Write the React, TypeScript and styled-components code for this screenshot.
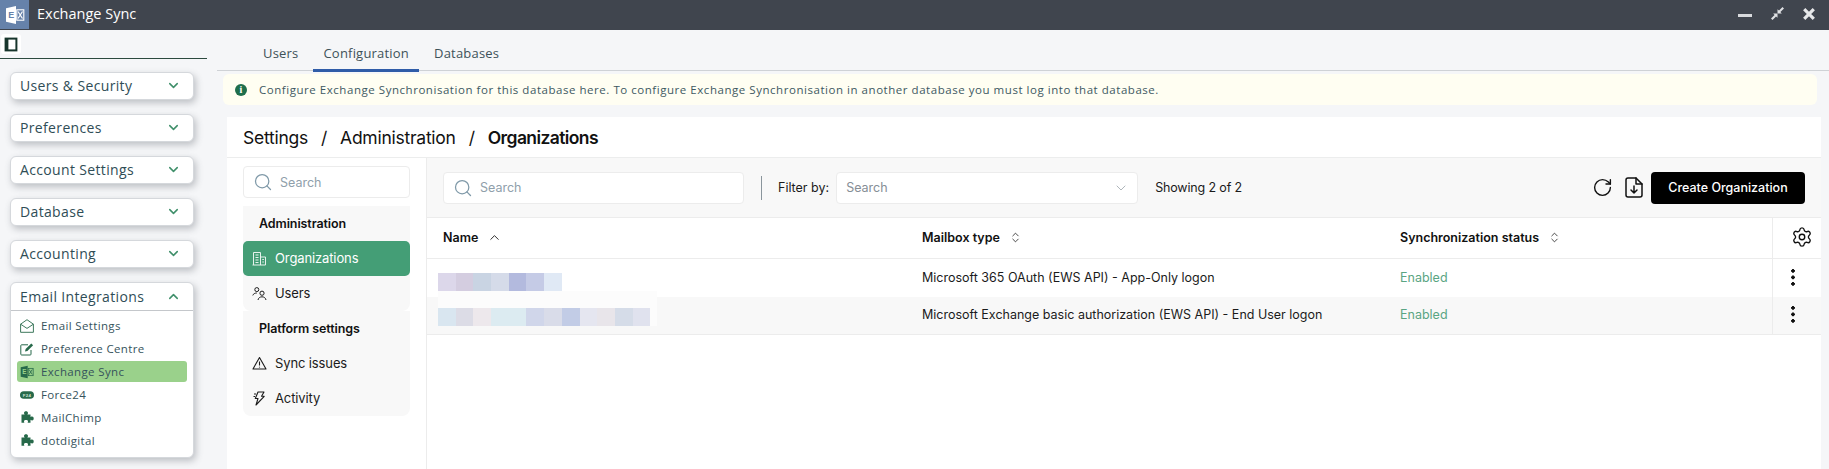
import React from 'react'
import styled, { createGlobalStyle } from 'styled-components'
import { ChevronDown, ChevronUp, ChevronsUpDown, Search as SearchIcon, RotateCw, Settings } from 'lucide-react'

const sidebarFont = `'Open Sans', 'Liberation Sans', sans-serif`
const contentFont = `Inter, 'Liberation Sans', sans-serif`

const Global = createGlobalStyle`
  html, body { margin: 0; padding: 0; height: 100%; background: #f5f6f8; overflow: hidden; }
  * { box-sizing: border-box; }
`

const Page = styled.div`
  width: 1829px;
  height: 469px;
  display: flex;
  flex-direction: column;
  overflow: hidden;
`

const TopBar = styled.header`
  height: 30px;
  flex: none;
  background: #40454e;
  display: flex;
  align-items: flex-start;
  color: #fff;
`

const LogoBox = styled.div`
  width: 29px;
  height: 29px;
  background: #6682aa;
  display: flex;
  align-items: center;
  justify-content: center;
`

const AppTitle = styled.div`
  margin-left: 8px;
  font: 400 14.5px/27px ${sidebarFont};
  flex: 1;
`

const WindowButtons = styled.div`
  height: 27px;
  display: flex;
  align-items: center;
  gap: 18px;
  padding-right: 14px;
`

const Body = styled.div`
  flex: 1;
  display: flex;
  min-height: 0;
`

const Sidebar = styled.aside`
  width: 207px;
  flex: none;
  display: flex;
  flex-direction: column;
`

const ToggleRow = styled.div`
  height: 29px;
  border-bottom: 1px solid #2c4a3f;
  padding: 4px 0 0 1px;
  margin-bottom: 13px;
`

const ToggleBox = styled.div`
  width: 20px;
  height: 20px;
  background: #fff;
  border-radius: 3px;
  display: flex;
  align-items: center;
  justify-content: center;
`

const SideList = styled.div`
  display: flex;
  flex-direction: column;
  gap: 14px;
  padding: 0 13px 0 10px;
`

const SideCard = styled.div`
  background: #fff;
  border: 1px solid #d5d8dc;
  border-radius: 6px;
  box-shadow: 2px 3px 7px rgba(60, 65, 75, 0.3);
`

const SideHead = styled.div<{ $open?: boolean }>`
  height: ${p => (p.$open ? 28 : 26)}px;
  padding: 0 12px 1px 9px;
  display: flex;
  align-items: center;
  justify-content: space-between;
  font: 400 14px ${sidebarFont};
  letter-spacing: 0.35px;
  color: #2f4d56;
  border-bottom: ${p => (p.$open ? '1px solid #c4c7cb' : 'none')};
`

const SideItems = styled.div`
  padding: 4px 6px 6px 6px;
  display: flex;
  flex-direction: column;
  gap: 2px;
`

const SideItem = styled.div<{ $active?: boolean }>`
  height: 21px;
  display: flex;
  align-items: center;
  gap: 7px;
  padding-left: 3px;
  border-radius: 3px;
  background: ${p => (p.$active ? '#9ad18b' : 'transparent')};
  font: 400 11.5px ${sidebarFont};
  letter-spacing: 0.35px;
  color: #36535c;
`

const IconSlot = styled.span`
  width: 14px;
  height: 14px;
  flex: none;
  display: flex;
  align-items: center;
  justify-content: center;
`

const Main = styled.main`
  flex: 1;
  min-width: 0;
  display: flex;
  flex-direction: column;
  padding: 0 8px 0 10px;
  font-family: ${contentFont};
`

const Tabs = styled.nav`
  height: 41px;
  flex: none;
  display: flex;
  gap: 5px;
  align-items: flex-end;
  border-bottom: 1px solid #cfd2d6;
  margin: 0 -8px 0 0;
  padding-left: 36px;
`

const Tab = styled.div<{ $active?: boolean }>`
  height: 32px;
  padding: 0 10px;
  margin-bottom: -2px;
  font: 400 13px ${sidebarFont};
  letter-spacing: 0.2px;
  color: #3e5259;
  line-height: 26px;
  border-bottom: 3px solid ${p => (p.$active ? '#2f5ca8' : 'transparent')};
`

const Notice = styled.div`
  margin: 3px 4px 0 6px;
  height: 31px;
  flex: none;
  background: #fffef2;
  border-radius: 6px;
  display: flex;
  align-items: center;
  gap: 12px;
  padding-left: 12px;
  font: 400 11.5px ${sidebarFont};
  letter-spacing: 0.54px;
  color: #3e5962;
`

const Card = styled.section`
  margin: 12px 0 0 10px;
  flex: 1;
  min-height: 0;
  background: #fff;
  display: flex;
  flex-direction: column;
`

const Crumbs = styled.div`
  height: 41px;
  flex: none;
  border-bottom: 1px solid #eceded;
  padding-left: 16px;
  display: flex;
  align-items: center;
  font-size: 17.5px;
  color: #111;
  letter-spacing: -0.25px;
`

const CrumbSep = styled.span`
  margin: 0 13px;
`

const CrumbCurrent = styled.span`
  font-weight: 600;
  letter-spacing: -0.6px;
`

const Split = styled.div`
  flex: 1;
  min-height: 0;
  display: flex;
`

const LeftPanel = styled.div`
  width: 200px;
  flex: none;
  border-right: 1px solid #ececec;
  padding: 8px 16px 0;
`

const SearchBox = styled.div<{ $width: number }>`
  width: ${p => p.$width}px;
  height: 32px;
  flex: none;
  background: #fff;
  border: 1px solid #ececec;
  border-radius: 4px;
  display: flex;
  align-items: center;
  gap: 7px;
  padding-left: 9px;
  font-size: 12.5px;
  color: #8fa0ab;
`

const NavGroups = styled.div`
  margin-top: 8px;
`

const NavGroup = styled.div`
  background: #f8f8f8;
  border-radius: 0 0 8px 8px;
`

const NavTitle = styled.div`
  height: 35px;
  padding-left: 16px;
  display: flex;
  align-items: center;
  font-size: 12.5px;
  font-weight: 600;
  letter-spacing: -0.1px;
  color: #111;
`

const NavItem = styled.div<{ $active?: boolean }>`
  height: 35px;
  padding: 0 0 1px 9px;
  display: flex;
  align-items: center;
  gap: 8px;
  border-radius: 5px;
  font-size: 13px;
  letter-spacing: -0.12px;
  color: ${p => (p.$active ? '#fff' : '#1b1b1b')};
  background: ${p => (p.$active ? '#449e76' : 'transparent')};
`

const Content = styled.div`
  flex: 1;
  min-width: 0;
  display: flex;
  flex-direction: column;
`

const Toolbar = styled.div`
  height: 60px;
  flex: none;
  background: #f8f8f8;
  border-bottom: 1px solid #ececec;
  display: flex;
  align-items: center;
  padding: 0 16px;
  font-size: 12.5px;
  color: #1b1b1b;
`

const Divider = styled.div`
  width: 1px;
  height: 24px;
  background: #8a959c;
  margin: 0 16px 0 17px;
`

const FilterLabel = styled.span`
  margin-right: 7px;
`

const SelectBox = styled.div`
  width: 302px;
  height: 32px;
  background: #fff;
  border: 1px solid #ececec;
  border-radius: 4px;
  display: flex;
  align-items: center;
  justify-content: space-between;
  padding: 0 8px 0 9px;
  color: #868e96;
  margin-right: 17px;
`

const Counter = styled.span`
  letter-spacing: -0.15px;
`

const Spacer = styled.div`
  flex: 1;
`

const ToolIcons = styled.div`
  display: flex;
  align-items: center;
  gap: 12px;
  margin-right: 8px;
`

const PrimaryButton = styled.button`
  width: 154px;
  height: 32px;
  background: #000;
  color: #fff;
  border: 0;
  border-radius: 4px;
  font: 500 12.5px ${contentFont};
`

const TableGrid = styled.div`
  display: grid;
  grid-template-columns: 479px 478px 388px 49px;
`

const HeadCell = styled.div<{ $last?: boolean }>`
  height: 41px;
  display: flex;
  align-items: center;
  gap: 9px;
  padding: 0 0 2px ${p => (p.$last ? 9 : 16)}px;
  justify-content: ${p => (p.$last ? 'center' : 'flex-start')};
  border-bottom: 1px solid #ececec;
  border-left: ${p => (p.$last ? '1px solid #ececec' : 'none')};
  font-size: 12.5px;
  font-weight: 600;
  color: #111;
`

const Cell = styled.div<{ $alt?: boolean; $last?: boolean; $green?: boolean }>`
  height: 38px;
  display: flex;
  align-items: center;
  padding: 0 0 2px ${p => (p.$last ? 0 : 16)}px;
  justify-content: ${p => (p.$last ? 'center' : 'flex-start')};
  background: ${p => (p.$alt ? '#f8f8f8' : '#fff')};
  border-bottom: ${p => (p.$alt ? '1px solid #ececec' : 'none')};
  border-left: ${p => (p.$last ? '1px solid #ececec' : 'none')};
  font-size: 12.5px;
  color: ${p => (p.$green ? '#5aa583' : '#1b1b1b')};
`

const BlurRow = styled.div<{ $offset: number; $halo?: boolean }>`
  position: relative;
  display: flex;
  height: 18px;
  margin-left: -5px;
  margin-top: ${p => p.$offset}px;

  &::before {
    content: ${p => (p.$halo ? "''" : 'none')};
    position: absolute;
    left: 0;
    top: -17px;
    width: 219px;
    height: 35px;
    background: #fcfcfc;
  }
`

const BlurPatch = styled.span<{ $color: string }>`
  position: relative;
  width: 17.7px;
  background: ${p => p.$color};
`

const Dots = styled.span`
  width: 4px;
  height: 17px;
  margin-right: 8px;
  background: radial-gradient(circle at 2px 2px, #111 1.6px, transparent 1.9px) 0 0 / 4px 6.5px repeat-y;
`

const GreenChevron = { color: '#3f8f6a', strokeWidth: 2.4 }

const OutlookIcon = ({ color = '#fff', bg = 'transparent', size = 20 }: { color?: string; bg?: string; size?: number }) => (
  <svg width={size} height={size} viewBox="0 0 20 20">
    <path d="M1 3.2 11 1v18L1 16.8z" fill={color} />
    <rect x="11.8" y="4.8" width="7" height="10.4" fill="none" stroke={color} strokeWidth="1.1" />
    <path d="M13 6.5l4.5 7M17.5 6.5l-4.5 7" stroke={color} strokeWidth="1.2" />
    <text x="3.2" y="13.4" fontSize="9" fontWeight="700" fontFamily="Liberation Sans, sans-serif" fill={bg}>E</text>
  </svg>
)

const PuzzleIcon = () => (
  <svg width="13" height="13" viewBox="0 0 13 13">
    <path d="M0.5 3.5h3.2c-.5-.7-.7-1.100-.7-1.600C3 .9 3.900.3 5 .3s2 .6 2 1.600c0 .5-.2.9-.7 1.600h3.200v2.600c.7-.5 1.100-.6 1.600-.6 1 0 1.600.9 1.600 1.900s-.6 2-1.600 2c-.5 0-.9-.2-1.600-.7v3.100H6.600c.3-.6.4-1 .4-1.400 0-.9-.9-1.400-2-1.400s-2 .5-2 1.400c0 .4.100.8.4 1.400H.5z" fill="#27694a" />
  </svg>
)

const Force24Icon = () => (
  <svg width="14" height="14" viewBox="0 0 14 14">
    <rect x="0" y="3.2" width="14" height="7.6" rx="3.8" fill="#27694a" />
    <text x="7" y="8.7" textAnchor="middle" fontSize="4.4" fontWeight="700" fontFamily="Liberation Sans, sans-serif" fill="#cfe3d7">F24</text>
  </svg>
)

const MailOpenIcon = () => (
  <svg width="14" height="14" viewBox="0 0 14 14" fill="none" stroke="#27694a" strokeWidth="0.9">
    <path d="M.6 5.2 7 .7l6.400 4.500v8.100H.6z" />
    <path d="M.6 5.2 7 9.4l6.400-4.200" />
  </svg>
)

const PencilBoxIcon = () => (
  <svg width="14" height="14" viewBox="0 0 14 14" fill="none">
    <path d="M11 8v4.200a.8.8 0 0 1-.8.8H1.600a.8.8 0 0 1-.8-.8V3.600a.8.8 0 0 1 .8-.8H8" stroke="#27694a" strokeWidth="1" />
    <path d="M5 9.500l.6-2.400L11.300 1.400l1.800 1.800-5.700 5.700z" fill="#27694a" />
  </svg>
)

const ExportIcon = () => (
  <svg width="18" height="21" viewBox="0 0 18 21" fill="none" stroke="#111" strokeWidth="1.5" strokeLinejoin="round" strokeLinecap="round">
    <path d="M3 1h8l6 6v11a2 2 0 0 1-2 2H3a2 2 0 0 1-2-2V3a2 2 0 0 1 2-2z" />
    <path d="M11 1v6h6" />
    <path d="M9 9v7M6 13l3 3 3-3" />
  </svg>
)

const PanelIcon = () => (
  <svg width="14" height="15" viewBox="0 0 14 15">
    <rect x="1.6" y="1.6" width="10.8" height="11.8" fill="#fff" stroke="#17352c" strokeWidth="2" />
    <rect x="1" y="1" width="3.4" height="13" fill="#17352c" />
  </svg>
)

const CollapseIcon = () => (
  <svg width="15" height="15" viewBox="0 0 15 15" fill="#dfe1e4">
    <path d="M1 12.500 4.600 8.900 3.200 7.500H7.500v4.300L6 10.400 2.500 14z" />
    <path d="M14 2.500 10.400 6.100l1.400 1.400H7.500V3.200L9 4.600 12.500 1z" />
  </svg>
)

const CloseIcon = () => (
  <svg width="12" height="12" viewBox="0 0 12 12" stroke="#e6e7e9" strokeWidth="3.2">
    <path d="M1.200 1.200l9.600 9.600M10.800 1.200l-9.600 9.600" />
  </svg>
)

const BuildingIcon = () => (
  <svg width="15" height="15" viewBox="0 0 15 15" fill="none" stroke="#e6f2ec" strokeWidth="1">
    <path d="M1.500 14V1.500h7V14" />
    <path d="M8.500 6h5v8h-13" />
    <path d="M3.500 4h3M3.500 6.500h3M3.500 9h3M3.500 11.500h3M10.300 8.500h1.600M10.300 11h1.600" />
  </svg>
)

const PeopleIcon = () => (
  <svg width="15" height="15" viewBox="0 0 15 15" fill="none" stroke="#1b1b1b" strokeWidth="1">
    <circle cx="4.800" cy="3.600" r="2" />
    <path d="M.8 9.400C1.300 7.800 3 7 4.800 7" />
    <circle cx="10" cy="7.200" r="2.100" />
    <path d="M6 14c.3-2 2-3.200 4-3.200s3.700 1.200 4 3.200" />
  </svg>
)

const WarningIcon = () => (
  <svg width="15" height="15" viewBox="0 0 15 15" fill="none" stroke="#1b1b1b" strokeWidth="1.100" strokeLinejoin="round">
    <path d="M7.500 1.500 14 13H1z" />
    <path d="M7.500 5.500v4M7.500 10.800v.8" />
  </svg>
)

const BoltIcon = () => (
  <svg width="15" height="15" viewBox="0 0 15 15" fill="none" stroke="#1b1b1b" strokeWidth="1.100" strokeLinejoin="round">
    <path d="M6 1h6L9.500 5.300h2.700L4 14l2-6.500H3.300z" />
    <path d="M2 3h2M1.500 5.500h1.500" />
  </svg>
)

const MinimizeBar = styled.span`
  width: 14px;
  height: 3px;
  margin-top: 3px;
  background: #d8dadd;
`

const InfoDot = styled.span`
  width: 12px;
  height: 12px;
  border-radius: 50%;
  background: #1f6e4c;
  color: #fff;
  font: 700 10px/12px 'Liberation Serif', serif;
  letter-spacing: 0;
  text-align: center;
  flex: none;
`

const sideGroups = ['Users & Security', 'Preferences', 'Account Settings', 'Database', 'Accounting']

const emailItems = [
  { label: 'Email Settings', icon: <MailOpenIcon /> },
  { label: 'Preference Centre', icon: <PencilBoxIcon /> },
  { label: 'Exchange Sync', icon: <OutlookIcon color="#27694a" bg="#9ad18b" size={14} />, active: true },
  { label: 'Force24', icon: <Force24Icon /> },
  { label: 'MailChimp', icon: <PuzzleIcon /> },
  { label: 'dotdigital', icon: <PuzzleIcon /> },
]

const rows = [
  {
    mailbox: 'Microsoft 365 OAuth (EWS API) - App-Only logon',
    blurOffset: 10,
    blur: ['#dcd7ea', '#d4cde0', '#c9d4e3', '#d5dbe9', '#b3bade', '#c5cbe6', '#e0e9f5'],
  },
  {
    mailbox: 'Microsoft Exchange basic authorization (EWS API) - End User logon',
    blurOffset: 4,
    blur: ['#d9e6f0', '#dcdce6', '#ede8ec', '#dcebf1', '#dcebf1', '#d0d6ea', '#d9dce9', '#c2cce6', '#e5e6f0', '#e8e5ea', '#d5dce8', '#e0e2ee'],
  },
]

export default function App() {
  return (
    <Page>
      <Global />
      <TopBar>
        <LogoBox>
          <OutlookIcon bg="#6682aa" />
        </LogoBox>
        <AppTitle>Exchange Sync</AppTitle>
        <WindowButtons>
          <MinimizeBar />
          <CollapseIcon />
          <CloseIcon />
        </WindowButtons>
      </TopBar>
      <Body>
        <Sidebar>
          <ToggleRow>
            <ToggleBox>
              <PanelIcon />
            </ToggleBox>
          </ToggleRow>
          <SideList>
            {sideGroups.map(g => (
              <SideCard key={g}>
                <SideHead>
                  {g}
                  <ChevronDown size={15} {...GreenChevron} />
                </SideHead>
              </SideCard>
            ))}
            <SideCard>
              <SideHead $open>
                Email Integrations
                <ChevronUp size={15} {...GreenChevron} />
              </SideHead>
              <SideItems>
                {emailItems.map(i => (
                  <SideItem key={i.label} $active={i.active}>
                    <IconSlot>{i.icon}</IconSlot>
                    {i.label}
                  </SideItem>
                ))}
              </SideItems>
            </SideCard>
          </SideList>
        </Sidebar>
        <Main>
          <Tabs>
            <Tab>Users</Tab>
            <Tab $active>Configuration</Tab>
            <Tab>Databases</Tab>
          </Tabs>
          <Notice>
            <InfoDot>i</InfoDot>
            Configure Exchange Synchronisation for this database here. To configure Exchange Synchronisation in another database you must log into that database.
          </Notice>
          <Card>
            <Crumbs>
              Settings
              <CrumbSep>/</CrumbSep>
              Administration
              <CrumbSep>/</CrumbSep>
              <CrumbCurrent>Organizations</CrumbCurrent>
            </Crumbs>
            <Split>
              <LeftPanel>
                <SearchBox $width={167}>
                  <SearchIcon size={20} color="#7f99a8" strokeWidth={1.5} />
                  Search
                </SearchBox>
                <NavGroups>
                  <NavGroup>
                    <NavTitle>Administration</NavTitle>
                    <NavItem $active>
                      <BuildingIcon />
                      Organizations
                    </NavItem>
                    <NavItem>
                      <PeopleIcon />
                      Users
                    </NavItem>
                  </NavGroup>
                  <NavGroup>
                    <NavTitle>Platform settings</NavTitle>
                    <NavItem>
                      <WarningIcon />
                      Sync issues
                    </NavItem>
                    <NavItem>
                      <BoltIcon />
                      Activity
                    </NavItem>
                  </NavGroup>
                </NavGroups>
              </LeftPanel>
              <Content>
                <Toolbar>
                  <SearchBox $width={301}>
                    <SearchIcon size={20} color="#7f99a8" strokeWidth={1.5} />
                    Search
                  </SearchBox>
                  <Divider />
                  <FilterLabel>Filter by:</FilterLabel>
                  <SelectBox>
                    Search
                    <ChevronDown size={16} color="#9aa3aa" strokeWidth={1.2} />
                  </SelectBox>
                  <Counter>Showing 2 of 2</Counter>
                  <Spacer />
                  <ToolIcons>
                    <RotateCw size={21} color="#111" strokeWidth={1.6} />
                    <ExportIcon />
                  </ToolIcons>
                  <PrimaryButton>Create Organization</PrimaryButton>
                </Toolbar>
                <TableGrid>
                  <HeadCell>
                    Name
                    <ChevronUp size={15} strokeWidth={1.4} />
                  </HeadCell>
                  <HeadCell>
                    Mailbox type
                    <ChevronsUpDown size={13} strokeWidth={1.4} />
                  </HeadCell>
                  <HeadCell>
                    Synchronization status
                    <ChevronsUpDown size={13} strokeWidth={1.4} />
                  </HeadCell>
                  <HeadCell $last>
                    <Settings size={22} strokeWidth={1.5} />
                  </HeadCell>
                  {rows.map((r, i) => (
                    <React.Fragment key={r.mailbox}>
                      <Cell $alt={i === 1}>
                        <BlurRow $offset={r.blurOffset} $halo={i === 1}>
                          {r.blur.map((c, j) => (
                            <BlurPatch key={j} $color={c} />
                          ))}
                        </BlurRow>
                      </Cell>
                      <Cell $alt={i === 1}>{r.mailbox}</Cell>
                      <Cell $alt={i === 1} $green>Enabled</Cell>
                      <Cell $alt={i === 1} $last>
                        <Dots />
                      </Cell>
                    </React.Fragment>
                  ))}
                </TableGrid>
              </Content>
            </Split>
          </Card>
        </Main>
      </Body>
    </Page>
  )
}
